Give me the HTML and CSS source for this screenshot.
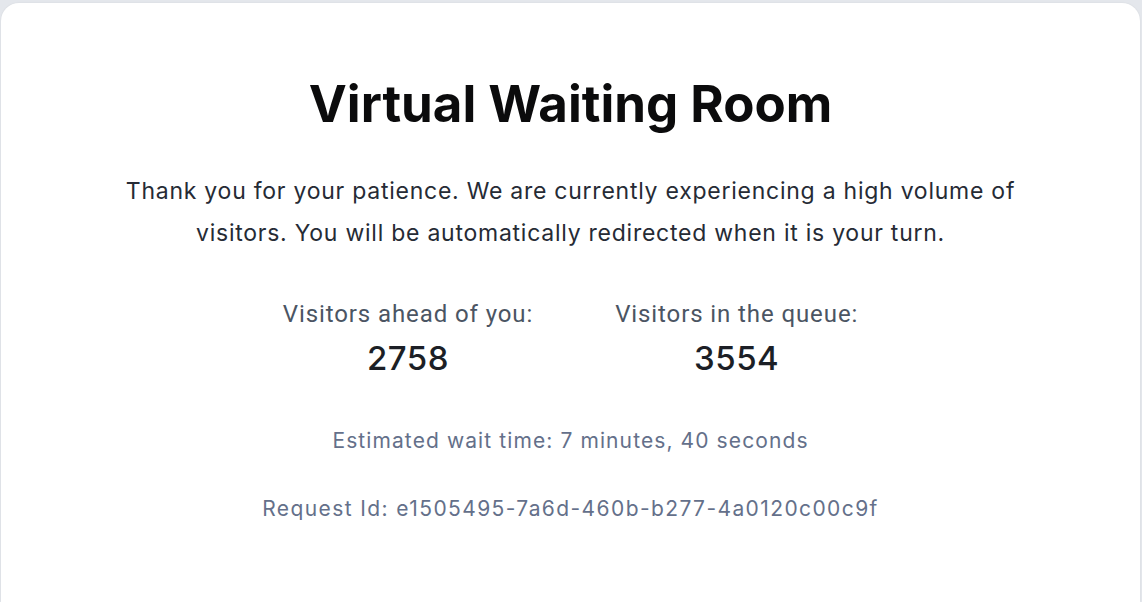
FILE: index.html
```html
<!DOCTYPE html>
<html>
<head>
<meta charset="utf-8">
<link rel="stylesheet" href="styles.css">
</head>
<body>
<main class="card">
  <h1 class="title">Virtual Waiting Room</h1>
  <p class="intro">Thank you for your patience. We are currently experiencing a high volume of visitors. You will be automatically redirected when it is your turn.</p>
  <div class="stats">
    <div class="stat">
      <div class="stat-label">Visitors ahead of you:</div>
      <div class="stat-value">2758</div>
    </div>
    <div class="stat">
      <div class="stat-label">Visitors in the queue:</div>
      <div class="stat-value">3554</div>
    </div>
  </div>
  <p class="meta meta-wait">Estimated wait time: 7 minutes, 40 seconds</p>
  <p class="meta meta-id">Request Id: e1505495-7a6d-460b-b277-4a0120c00c9f</p>
</main>
</body>
</html>
```
FILE: styles.css
```css
html, body {
  margin: 0;
  height: 100%;
}
body {
  background: #e4e7ec;
  padding: 3px 2px 0 1px;
  box-sizing: border-box;
  overflow: hidden;
  display: flex;
  flex-direction: column;
  font-family: Inter, "Noto Sans", sans-serif;
}
.card {
  flex: 1;
  background: #ffffff;
  border-radius: 18px 18px 0 0;
  box-shadow: 0 0 2px rgba(0,0,0,0.08);
  display: flex;
  flex-direction: column;
  align-items: center;
  padding-top: 70px;
  box-sizing: border-box;
}
.title {
  margin: 0;
  font-size: 51px;
  font-weight: 700;
  color: #0b0b0c;
  line-height: 62px;
}
.intro {
  margin: 35px 0 0;
  max-width: 900px;
  text-align: center;
  font-size: 23px;
  letter-spacing: 0.75px;
  line-height: 42px;
  color: #262b35;
}
.stats {
  display: flex;
  gap: 82px;
  margin-top: 44px;
}
.stat {
  display: flex;
  flex-direction: column;
  align-items: center;
}
.stat-label {
  font-family: Roboto, Inter, sans-serif;
  font-size: 24px;
  letter-spacing: 0.9px;
  color: #4b5563;
  line-height: 32px;
}
.stat-value {
  font-size: 33px;
  font-weight: 500;
  letter-spacing: 0.5px;
  color: #1c1f26;
  line-height: 40px;
  margin-top: 8px;
}
.meta {
  margin: 0;
  font-size: 21px;
  letter-spacing: 1.1px;
  color: #64708a;
  line-height: 28px;
}
.meta-wait {
  margin-top: 49px;
}
.meta-id {
  margin-top: 40px;
  letter-spacing: 1.4px;
}
```
